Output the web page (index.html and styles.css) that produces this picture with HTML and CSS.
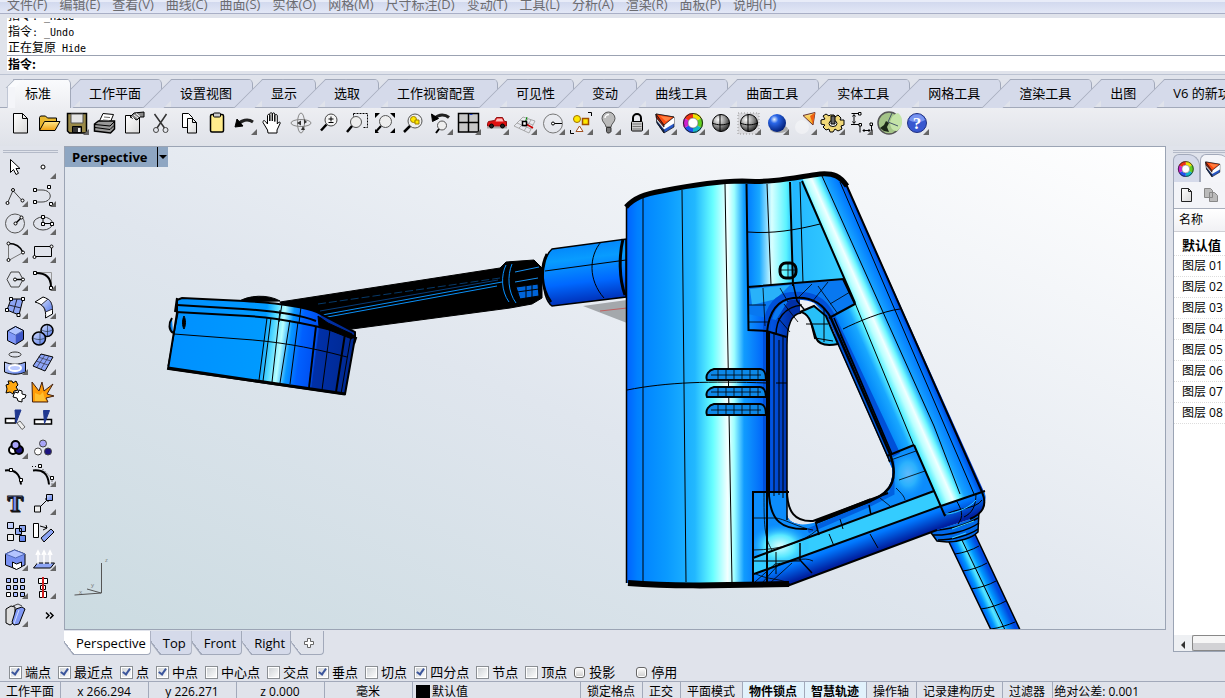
FILE: index.html
```html
<!DOCTYPE html>
<html lang="zh-CN">
<head>
  <meta charset="UTF-8" />
  <title>Rhinoceros</title>
  <link rel="stylesheet" href="styles.css">
</head>
<body>

  <!-- gradients shared by the icons -->
  <svg class="defs" width="0" height="0" aria-hidden="true">
    <defs>
      <radialGradient id="gGray" cx=".35" cy=".3" r=".75"><stop offset="0" stop-color="#fff"/><stop offset=".5" stop-color="#999"/><stop offset="1" stop-color="#222"/></radialGradient>
      <radialGradient id="gBlue" cx=".35" cy=".3" r=".75"><stop offset="0" stop-color="#e8f4ff"/><stop offset=".3" stop-color="#2a66e8"/><stop offset="1" stop-color="#001a70"/></radialGradient>
      <linearGradient id="gSoft" x2="1" y2="1"><stop offset="0" stop-color="#d4defc"/><stop offset="1" stop-color="#5478e8"/></linearGradient>
      <linearGradient id="gPage" x2="1" y2="1"><stop offset="0" stop-color="#fff"/><stop offset="1" stop-color="#d8d8d8"/></linearGradient>
      <linearGradient id="gGold" x2="0" y2="1"><stop offset="0" stop-color="#ffe88a"/><stop offset="1" stop-color="#f0a010"/></linearGradient>
      <symbol id="wheel" viewBox="0 0 28 28">
        <g fill="none" stroke-width="5">
          <path d="M15 6.500A7.500 7.500 0 0 1 21.500 10.200" stroke="#f0e000"/>
          <path d="M21.500 10.200A7.500 7.500 0 0 1 21.500 17.800" stroke="#60d020"/>
          <path d="M21.500 17.800A7.500 7.500 0 0 1 15 21.500" stroke="#10b8c8"/>
          <path d="M15 21.500A7.500 7.500 0 0 1 8.500 17.800" stroke="#2050f0"/>
          <path d="M8.500 17.800A7.500 7.500 0 0 1 8.500 10.200" stroke="#d020d0"/>
          <path d="M8.500 10.200A7.500 7.500 0 0 1 15 6.500" stroke="#f03010"/>
        </g>
        <circle cx="15" cy="14" r="9.500" fill="none" stroke="#222"/><circle cx="15" cy="14" r="5" fill="#fff" stroke="#555" stroke-width=".6"/>
      </symbol>
      <symbol id="layers" viewBox="0 0 28 28">
        <g stroke="#111" stroke-width=".7">
          <path d="M6 5l1 9 7 10 10-6V8z" fill="#2858c8"/>
          <path d="M6 5l1 9 7 10v-8z" fill="#102860"/>
          <path d="M14 15.500v5l10-6V8z" fill="#fff" stroke="none"/>
          <path d="M6.500 9l7.500 8v3.500L7 12z" fill="#ddd" stroke="none"/>
          <path d="M6 5l8 11v2L6.500 9z" fill="#b01800"/>
          <path d="M6 5l18 3-10 8z" fill="#ff4c10"/>
        </g>
        <path d="M10 7l12 1.500-6 4z" fill="#ff8040"/>
      </symbol>
    </defs>
  </svg>

  <nav class="menu">
    <a href="#">文件(F)</a><a href="#">编辑(E)</a><a href="#">查看(V)</a><a href="#">曲线(C)</a><a href="#">曲面(S)</a><a href="#">实体(O)</a><a href="#">网格(M)</a><a href="#">尺寸标注(D)</a><a href="#">变动(T)</a><a href="#">工具(L)</a><a href="#">分析(A)</a><a href="#">渲染(R)</a><a href="#">面板(P)</a><a href="#">说明(H)</a>
  </nav>

  <section class="command">
    <div class="history">
      <p>指令<span class="mono">: _Hide</span></p>
      <p>指令<span class="mono">: _Undo</span></p>
      <p>正在复原<span class="mono"> Hide</span></p>
    </div>
    <div class="prompt"><label for="cmd">指令:</label><input type="text" id="cmd"></div>
  </section>

  <header class="ribbon">
    <div class="tabs">
      <button class="tab active">标准</button><button class="tab">工作平面</button><button class="tab">设置视图</button><button class="tab short">显示</button><button class="tab short">选取</button><button class="tab long">工作视窗配置</button><button class="tab short">可见性</button><button class="tab short">变动</button><button class="tab">曲线工具</button><button class="tab">曲面工具</button><button class="tab">实体工具</button><button class="tab">网格工具</button><button class="tab">渲染工具</button><button class="tab short">出图</button><button class="tab">V6 的新功能</button>
    </div>
    <div class="toolbar">
      <button class="tool" aria-label="新建"><svg viewBox="0 0 28 28"><path d="M7.500 4.500h9l5 5v14.500h-14z" fill="url(#gPage)"/><path d="M16.500 4.500v5h5"/></svg></button>
      <button class="tool" aria-label="打开"><svg viewBox="0 0 28 28"><path d="M5.500 21V8.500l1-1.500h5l2 2h9v4" fill="#e8b830"/><path d="M5.500 21.500l5-9h15.500l-5 9z" fill="url(#gGold)"/></svg></button>
      <button class="tool more" aria-label="保存"><svg viewBox="0 0 28 28"><path d="M5.500 4.500h19v19.500h-17l-2-2z" fill="#9a8a48" stroke-width="1.500"/><path d="M9 5h12v9H9z" fill="#e4e4e4" stroke="#555"/><path d="M10.500 17.500h9v6h-9z" fill="#333"/><path d="M16 19h2.500v4H16z" fill="#eee" stroke="none"/></svg></button>
      <button class="tool" aria-label="打印"><svg viewBox="0 0 28 28"><path d="M9 13l4-8.500 10.500 1L20 14" fill="#fff"/><path d="M4.500 15l4-3h16v8l-4 4-16-2z" fill="#999" stroke-width="1.500"/><path d="M5 15.500l15 1.500 4.500-4.500M5 18.500l15 2 4-4" /><path d="M14 8l6 .5M13 11l6 .5" stroke="#666"/></svg></button>
      <button class="tool" aria-label="属性"><svg viewBox="0 0 28 28"><path d="M7.500 6.500h14v17.500h-14z" fill="url(#gPage)"/><path d="M12 8l4-4 10-1v5h-4l-3 3z" fill="#888"/><path d="M14 8l3 3M16 6l4 3M18 4.500l4 3" stroke="#fff"/></svg></button>
      <button class="tool" aria-label="剪切"><svg viewBox="0 0 28 28"><path d="M8.500 5l10 14M20.500 5L11 19" stroke="#333" stroke-width="1.500"/><circle cx="10" cy="21" r="2.500" stroke="#444"/><circle cx="19.500" cy="21" r="2.500" stroke="#444"/></svg></button>
      <button class="tool" aria-label="复制"><svg viewBox="0 0 28 28"><path d="M8.500 4.500h6l4 4v10h-10z" fill="#fff"/><path d="M13.500 9.500h5l4 4v10.500h-9z" fill="url(#gPage)"/><path d="M18.500 9.500v4h4"/></svg></button>
      <button class="tool" aria-label="粘贴"><svg viewBox="0 0 28 28"><rect x="8.500" y="5.500" width="13" height="17.500" rx="1.500" fill="#ffec8c" stroke-width="1.500"/><rect x="11.500" y="4" width="7" height="4" rx="1" fill="#ccc"/></svg></button>
      <button class="tool more" aria-label="撤销"><svg viewBox="0 0 28 28"><path d="M8 16c3-5 10-6.500 15-3" stroke="#222" stroke-width="3"/><path d="M5 18l2-8 6 7z" fill="#000"/></svg></button>
      <button class="tool" aria-label="平移"><svg viewBox="0 0 28 28"><path d="M9.500 21L5 13.500c-.5-2 1.500-2.500 2.500-1l2 2.500V6.500c.3-1.500 2-1.500 2.300 0V12 4.800c.4-1.500 2.200-1.500 2.500 0V12 5c.4-1.500 2.200-1.500 2.500 0v7.500-6c.4-1.300 2.200-1.300 2.500 0V15c1-2 3-2.500 3-1l-3.300 7v3h-9z" fill="#fff"/></svg></button>
      <button class="tool" aria-label="旋转"><svg viewBox="0 0 28 28"><ellipse cx="15" cy="14" rx="10" ry="3.500" stroke="#888"/><ellipse cx="15" cy="14" rx="3.500" ry="10" stroke="#888"/><path d="M11 14l4-2.500v5zM18 10l3 3-3 2zM15 21l2-4 2 4z" fill="#333" stroke="none"/></svg></button>
      <button class="tool" aria-label="动态缩放"><svg viewBox="0 0 28 28"><circle cx="17" cy="11" r="6" fill="#f4f4f4" stroke="#444"/><path d="M12.500 15.500L7 21.500" stroke-width="2.500"/><path d="M17 7.500v5M14.500 10h5M14.500 13.500h5"/></svg></button>
      <button class="tool" aria-label="框选缩放"><svg viewBox="0 0 28 28"><path d="M11.500 4.500h14v14h-5M11.500 4.500v4" stroke-dasharray="2 1"/><circle cx="14" cy="13" r="5.500" fill="#eee" stroke="#555"/><path d="M10 17l-5 6" stroke-width="2.500"/></svg></button>
      <button class="tool" aria-label="缩放至最大范围"><svg viewBox="0 0 28 28"><circle cx="15.500" cy="12.500" r="6" fill="#eee" stroke="#555"/><path d="M11 17l-5 5.500" stroke-width="2"/><path d="M5 4h5l-5 5zM25 4h-5l5 5zM25 24h-5l5-5zM5 24h4l-4-4z" fill="#000" stroke="none"/></svg></button>
      <button class="tool" aria-label="缩放至选取物件"><svg viewBox="0 0 28 28"><circle cx="17" cy="12" r="7" fill="#eee" stroke="#555"/><path d="M12 17l-6 6" stroke-width="2.500"/><circle cx="15.500" cy="10.500" r="3" fill="#ffe800" stroke="#a08000"/><path d="M17 11h4v4h-4z" fill="#ffe800" stroke="#a08000"/></svg></button>
      <button class="tool more" aria-label="复原缩放"><svg viewBox="0 0 28 28"><path d="M9 9c4-4 10-4 14-.5" stroke="#222" stroke-width="3"/><path d="M5.500 5l1 7.500 6-3z" fill="#000"/><circle cx="16" cy="16.500" r="4.500" fill="#eee" stroke="#555"/><path d="M13 20l-3 4" stroke-width="2"/></svg></button>
      <button class="tool more" aria-label="四个视图"><svg viewBox="0 0 28 28"><path d="M4.500 4.500h20v18.500h-20z" fill="#c8c8c8" stroke-width="1.500"/><path d="M14.500 4v19M4 13.500h21" stroke-width="1.500"/><path d="M15.500 5.500h3" stroke="#2040c0"/></svg></button>
      <button class="tool more" aria-label="设置视图"><svg viewBox="0 0 28 28"><path d="M5 18.500h20" stroke="#aaa" stroke-width="2"/><path d="M5.500 14.500l1-2 6-1 2-3h6l2 4h2v4.500h-19z" fill="#e01010" stroke="#901010"/><path d="M15 9.500h5l1.500 3h-8z" fill="#fbb" stroke="none"/><circle cx="9.500" cy="17" r="2" fill="#222"/><circle cx="20.500" cy="17" r="2" fill="#222"/></svg></button>
      <button class="tool more" aria-label="设置工作平面"><svg viewBox="0 0 28 28"><path d="M4 17l9-9 12 4-6 12zM7 14l14 6M10 11l13 5M9 19l9-9M14 22l7-11" stroke="#999" stroke-width=".8"/><path d="M16 15l7 4" stroke="#c00" stroke-width="1.500"/><path d="M15 14l2-6" stroke="#080"/><path d="M12.500 12.500h4v4h-4z" fill="#fff" stroke-width="1.500"/></svg></button>
      <button class="tool more" aria-label="圆"><svg viewBox="0 0 28 28"><circle cx="15" cy="14.500" r="9.500" stroke="#777"/><path d="M15 14.500h9"/><circle cx="15" cy="14.500" r="1.500" fill="#fff"/></svg></button>
      <button class="tool more" aria-label="选取"><svg viewBox="0 0 28 28"><circle cx="11" cy="10" r="3.500" fill="#ffe800" stroke="#a07000"/><path d="M16.500 9.500h6v6h-6z" fill="#ffe800" stroke="#a05000" stroke-width="1.500"/><path d="M13.500 17l-3.500 5.500h7z" fill="#fff" stroke="#a05020"/><path d="M22 3.500h3.500V7M4.500 21v3.500H8"/></svg></button>
      <button class="tool more" aria-label="隐藏"><svg viewBox="0 0 28 28"><path d="M12 18c0-3-4-5-4-8.500a6.500 6.500 0 0 1 13 0C21 13 17 15 17 18z" fill="#bbb" stroke="#555"/><path d="M11 9c0-2 2-3.500 4-3.500" stroke="#fff" stroke-width="1.500"/><path d="M12.500 18.500h4.500v4l-1.500 1.500h-2l-1-1.500z" fill="#777" stroke="#333"/></svg></button>
      <button class="tool more" aria-label="锁定"><svg viewBox="0 0 28 28"><path d="M11 13V9a4 4 0 0 1 8 0v4" stroke-width="2"/><rect x="9.500" y="12.500" width="11" height="9.500" rx="1" fill="#ccc"/><path d="M10.500 15h9M10.500 17.500h9M10.500 20h9" stroke="#777"/></svg></button>
      <button class="tool more" aria-label="图层"><svg viewBox="0 0 28 28"><use href="#layers" stroke="none"/></svg></button>
      <button class="tool more" aria-label="颜色"><svg viewBox="0 0 28 28"><use href="#wheel"/></svg></button>
      <button class="tool" aria-label="着色"><svg viewBox="0 0 28 28"><circle cx="15" cy="14" r="8.500" fill="url(#gGray)"/><path d="M6.500 14c5 2.500 12 2.500 17 0M14 5.500v17"/></svg></button>
      <button class="tool more" aria-label="着色全部"><svg viewBox="0 0 28 28"><path d="M4 4h21v21H4z" stroke="#999" stroke-dasharray="1 2" fill="#d8d8dc"/><circle cx="15" cy="14" r="8.500" fill="url(#gGray)"/><path d="M6.500 14c5 2.500 12 2.500 17 0M14 5.500v17"/></svg></button>
      <button class="tool more" aria-label="渲染"><svg viewBox="0 0 28 28"><ellipse cx="17" cy="20" rx="9" ry="4" fill="#aaa" stroke="none"/><circle cx="15" cy="14" r="9" fill="url(#gBlue)" stroke="none"/></svg></button>
      <button class="tool more" aria-label="聚光灯"><svg viewBox="0 0 28 28"><circle cx="12" cy="18" r="7" fill="#fff" stroke="none" opacity=".4"/><path d="M13 6.500l12-3-2 12.500z" fill="url(#gGold)" stroke="#633"/><path d="M20 7l5-3.500-2 12z" fill="#f06010" stroke="none"/></svg></button>
      <button class="tool more" aria-label="选项"><svg viewBox="0 0 28 28"><path d="M12 6h4l1 2 3-2 3 3-1 2h4v5l-3 1 1 3-4 2-3-2-2 3h-3l-1-3-3 1-3-3 2-2-4-1v-4l4-1-2-3 3-2 3 2z" fill="#f0d878"/><ellipse cx="15" cy="14.500" rx="4" ry="3" fill="#fff"/><path d="M13 7h4v8h-4z" fill="#666"/></svg></button>
      <button class="tool more" aria-label="尺寸标注"><svg viewBox="0 0 28 28"><path d="M5.500 4.500h8M5 15.500h9v8M8 6v8M6.500 7.500L8 5.500l1.500 2M6.500 12.500L8 14.500l1.500-2M25.500 14v10M17 21.500h7M18.500 20L17 21.500l1.500 1.500M22.500 20l1.500 1.500-1.500 1.500"/><path d="M12.500 3.500h2.500v2.500h-2.500zM24 14h2.500v2.500H24zM13 14.500h2.500v2.500H13z" fill="#fff"/></svg></button>
      <button class="tool" aria-label="Grasshopper"><svg viewBox="0 0 28 28"><circle cx="15" cy="14" r="11" fill="#a4c488" stroke="#555" stroke-width="1.500"/><path d="M16 13c2-6 4-8 8-9a11 11 0 0 1-1 18c-5 0-7-4-7-9z" fill="#c4e4a8" stroke="none"/><path d="M6 19l4-3 2-4 3 2-2 4 2 5-5-1z" fill="#1c2818" stroke="none"/><path d="M14 13l10 4M14 13l4-9" stroke="#456"/></svg></button>
      <button class="tool more" aria-label="说明"><svg viewBox="0 0 28 28"><circle cx="15" cy="14" r="9.500" fill="#3858d0" stroke="#203080"/><path d="M7 11a8.500 8.500 0 0 1 16 0c-5 3-11 3-16 0z" fill="#7894f0" stroke="none"/><text class="glyph-help" x="15" y="20" text-anchor="middle">?</text></svg></button>
    </div>
  </header>

  <main>
    <aside class="side">
      <div class="grip"></div>
      <div class="tools">
        <button class="tool" aria-label="选取"><svg viewBox="0 0 28 28"><path d="M9.500 6.500v13l3-3 2.500 5 2.500-1.200-2.500-4.800h4z" fill="#fff"/></svg></button>
        <button class="tool more" aria-label="点"><svg viewBox="0 0 28 28"><circle cx="14" cy="14" r="2" fill="#fff"/></svg></button>
        <button class="tool more" aria-label="多重直线"><svg viewBox="0 0 28 28"><path d="M6.500 22L12 9.500l9.500 10.500" stroke="#444"/><g fill="#fff"><circle cx="6.500" cy="22" r="1.500"/><circle cx="12" cy="9" r="1.500"/><circle cx="21.500" cy="19.500" r="1.500"/></g></svg></button>
        <button class="tool more" aria-label="控制点曲线"><svg viewBox="0 0 28 28"><path d="M6 9h7c11 0 11 12 0 12H6" stroke="#444"/><path d="M4.500 7.500h3v3h-3zM18.500 4.500h3v3h-3zM4.500 19.500h3v3h-3zM20.500 21.500h3v3h-3z" fill="#fff"/></svg></button>
        <button class="tool more" aria-label="圆"><svg viewBox="0 0 28 28"><circle cx="14" cy="14.500" r="9.500" stroke="#555"/><path d="M14.500 14.500l6-6" stroke-width="1.500"/><circle cx="14.500" cy="14.500" r="1.500" fill="#fff"/><circle cx="20.500" cy="8.500" r="1.500" fill="#fff"/></svg></button>
        <button class="tool more" aria-label="椭圆"><svg viewBox="0 0 28 28"><ellipse cx="14" cy="14.500" rx="9.500" ry="6.500" stroke="#444"/><path d="M14 9v5.500h9"/><path d="M12.500 6.500h3v3h-3zM12.500 13.500h3v3h-3zM21.500 13.500h3v3h-3z" fill="#fff"/></svg></button>
        <button class="tool more" aria-label="圆弧"><svg viewBox="0 0 28 28"><path d="M7.500 6.500c7 0 12 3 14.500 9" stroke-width="1.500"/><path d="M7.500 6.500v17l14.500-8" stroke="#777"/><g fill="#fff"><circle cx="7.500" cy="6.500" r="1.500"/><circle cx="7.500" cy="23" r="1.500"/><circle cx="22" cy="15.500" r="1.500"/></g></svg></button>
        <button class="tool more" aria-label="矩形"><svg viewBox="0 0 28 28"><path d="M5.500 9.500h17v10h-17z"/><circle cx="22.500" cy="9.500" r="1.500" fill="#fff"/><circle cx="5.500" cy="20" r="1.500" fill="#fff"/></svg></button>
        <button class="tool more" aria-label="多边形"><svg viewBox="0 0 28 28"><path d="M6 14.500l4-7.500h8l4 7.500-4 7.500h-8z" stroke="#444"/><path d="M14 14.500h8" stroke-width="1.500"/><circle cx="14" cy="14.500" r="1.500" fill="#fff"/><circle cx="22" cy="14.500" r="1.500" fill="#fff"/></svg></button>
        <button class="tool more" aria-label="曲线圆角"><svg viewBox="0 0 28 28"><path d="M7 7.500h15.500v14" stroke="#999"/><path d="M7 8c9 0 15 4 15 14" stroke-width="2"/><path d="M4.500 6.500h3v3h-3zM20.500 21.500h3v3h-3z" fill="#fff"/></svg></button>
        <button class="tool more" aria-label="曲面"><svg viewBox="0 0 28 28"><path d="M10 6h12l-4 16-12-5z" fill="#8ca4f4"/><path d="M16 6l-4 14M8 12l12 3" stroke="#223"/><path d="M8.500 4.500h3v3h-3zM20.500 4.500h3v3h-3zM4.500 15.500h3v3h-3zM16 20.500h3v3h-3z" fill="#fff"/></svg></button>
        <button class="tool more" aria-label="曲面圆角"><svg viewBox="0 0 28 28"><path d="M6 9l8-5c7 2 10 6 9.500 17l-7 4c1-10-3-14-10.500-16z" fill="#fff"/><path d="M12 12l7-6c3 2 4 5 4.500 10l-7 3c0-3-2-6-4.500-7z" fill="url(#gSoft)" stroke="#334"/></svg></button>
        <button class="tool more" aria-label="立方体"><svg viewBox="0 0 28 28"><path d="M6.500 10l8 4v9.500l-8-4z" fill="#8098f8" stroke="none"/><path d="M14.500 14l8-4.500v9l-8 5z" fill="#4058c8" stroke="none"/><path d="M6.500 10l8-4.500 8 4-8 4.500z" fill="#b0c4ff" stroke="#5068b8"/><path d="M6.500 10l8-4.500 8 4v9l-8 5-8-4z"/></svg></button>
        <button class="tool more" aria-label="布尔运算"><svg viewBox="0 0 28 28"><circle cx="18" cy="9.500" r="6" fill="url(#gSoft)" stroke-width="1.500"/><circle cx="10" cy="17.500" r="6.500" fill="url(#gSoft)" stroke-width="1.500"/><path d="M4 17c4 2 8 2 12 0M11 11.500v12M13 9c3 2 7 2 10 0M18.500 4v11" stroke="#234" stroke-width=".7"/></svg></button>
        <button class="tool more" aria-label="投影曲线"><svg viewBox="0 0 28 28"><path d="M3.500 13c7 3 14 3 21 0v10c-7 3-14 3-21 0z" fill="url(#gSoft)"/><ellipse cx="14" cy="19" rx="6" ry="3" fill="#b8c8ff" stroke="#fff" stroke-width="2"/><ellipse cx="14" cy="5.500" rx="6" ry="2.500" stroke="#333"/></svg></button>
        <button class="tool more" aria-label="网格"><svg viewBox="0 0 28 28"><path d="M4 17l8-12 12 3-8 14z" fill="#8ca4f8"/><path d="M8 18l8-12M12 20l8-13M7 12l12 4M9 8l13 4" stroke="#334" stroke-width=".7"/></svg></button>
        <button class="tool" aria-label="组合"><svg viewBox="0 0 28 28"><path d="M5 8l3-1-1-3h4l1 2 3-2 2 4-2 2 2 3-4 1-1 3-3-2-4 1 1-4z" fill="#ffa810"/><path d="M14 15l3 1 1-3 3 1v3l4 1-1 3-3 1v3l-4-1-1-3-4-1 1-3z" fill="#fff"/></svg></button>
        <button class="tool" aria-label="炸开"><svg viewBox="0 0 28 28"><path d="M3.500 25L3 5l7 9 3-9 2 9 9-7-6 10 7 2-8 2 2 4z" fill="#ff9c08" stroke="#421"/><path d="M6 24l0-8 5 2 3-3 1 4 2 5z" fill="#ffc030" stroke="none"/></svg></button>
        <button class="tool" aria-label="修剪"><svg viewBox="0 0 28 28"><path d="M4.500 13.500h10v4.500h-10z" fill="#fff" stroke-width="1.500"/><path d="M14 5h6l-5 13z" fill="#203890" stroke="#203890"/><path d="M16 18l3-2 5 6-3 2.500z" fill="#eee" stroke="#666"/></svg></button>
        <button class="tool" aria-label="分割"><svg viewBox="0 0 28 28"><path d="M5.500 14.500h17v4.500h-17z" fill="#fff" stroke-width="1.500"/><path d="M14.500 5.500h6l-5 13z" fill="#203890" stroke="#203890"/></svg></button>
        <button class="tool more" aria-label="群组"><svg viewBox="0 0 28 28"><g stroke-width="2"><circle cx="12" cy="17" r="4" fill="#fff"/><circle cx="18" cy="17" r="4" fill="#1c1480"/><circle cx="14.500" cy="12" r="4" fill="#a8a4f8"/></g></svg></button>
        <button class="tool" aria-label="解散群组"><svg viewBox="0 0 28 28"><circle cx="14" cy="10.500" r="3.500" fill="#a8a4f8" stroke="#444"/><circle cx="9" cy="18.500" r="3.500" fill="#fff" stroke="#444"/><circle cx="19" cy="18.500" r="3.500" fill="#1c1480" stroke="#444"/></svg></button>
        <button class="tool" aria-label="编辑点"><svg viewBox="0 0 28 28"><path d="M4 9.500c10-1 15 3 16 14" stroke-width="2"/><path d="M8.500 7.500h3v3h-3zM18.500 17.500h3v3h-3z" fill="#fff"/></svg></button>
        <button class="tool more" aria-label="控制点"><svg viewBox="0 0 28 28"><path d="M4 9.500c10-1 15 3 16 14" stroke-width="2"/><path d="M3 5.500h8l12 12v8" stroke-dasharray="1 2"/><path d="M9.500 3.500h3v3h-3zM21.500 15.500h3v3h-3z" fill="#fff"/></svg></button>
        <button class="tool" aria-label="文字"><svg viewBox="0 0 28 28"><text class="glyph-text back" x="15" y="23" text-anchor="middle">T</text><text class="glyph-text" x="14" y="22" text-anchor="middle">T</text></svg></button>
        <button class="tool more" aria-label="移动"><svg viewBox="0 0 28 28"><path d="M12 17l7-7M16 10h3v3"/><path d="M5.500 17h6v6h-6z" fill="#eee"/><path d="M17.500 5.500h6v6h-6z" fill="url(#gSoft)"/></svg></button>
        <button class="tool" aria-label="复制"><svg viewBox="0 0 28 28"><path d="M6.500 5.500h6v6h-6zM18.500 8.500h6v6h-6zM14.500 11.500h6v6h-6zM18.500 18.500h6v6h-6z" fill="url(#gSoft)"/><path d="M6.500 17.500h6v6h-6z" fill="#eee"/></svg></button>
        <button class="tool" aria-label="旋转"><svg viewBox="0 0 28 28"><path d="M4.500 6.500h5v14h-5z" fill="#fff"/><path d="M11 9l7 2M14 13l4-2-1-3"/><path d="M12 21l10-9 3 3-10 10z" fill="#8ca4f4"/></svg></button>
        <button class="tool more" aria-label="实体工具"><svg viewBox="0 0 28 28"><path d="M4.500 9l9-4 10.500 4v11l-9 4-10.500-4z" fill="#7890f0"/><path d="M4.500 9l10 4 9.500-4-10.500-4z" fill="#b4c4ff" stroke="#5068b8"/><path d="M11.500 17l4 2 5-2v5l-5 2.500-4-2z" fill="#fff"/></svg></button>
        <button class="tool more" aria-label="拉伸"><svg viewBox="0 0 28 28"><path d="M4.500 23l4-5h17l-4 5z" fill="#8ca4f4"/><path d="M9 19V8M15 19V8M21 19V8M7 10l2-4 2 4M13 10l2-4 2 4M19 10l2-4 2 4" stroke="#fff" stroke-width="1.500"/></svg></button>
        <button class="tool more" aria-label="阵列"><svg viewBox="0 0 28 28"><path d="M5.500 5.500h4v4h-4zM12.500 5.500h4v4h-4zM19.500 5.500h4v4h-4zM5.500 12.500h4v4h-4zM12.500 12.500h4v4h-4zM19.500 12.500h4v4h-4zM12.500 19.500h4v4h-4zM19.500 19.500h4v4h-4z" fill="#a8bcff"/><path d="M5.500 19.500h4v4h-4z" fill="#fff"/></svg></button>
        <button class="tool more" aria-label="对齐"><svg viewBox="0 0 28 28"><path d="M9.500 5.500h9v5h-9zM11.500 12.500h5v4h-5zM10.500 18.500h7v6h-7z" fill="#fff"/><path d="M14 4v21" stroke="#d02020" stroke-width="2"/></svg></button>
        <button class="tool more" aria-label="分析"><svg viewBox="0 0 28 28"><path d="M5 8l5-3 4 1v15l-5 3-4-2z" fill="#ddd"/><path d="M15 8l6-2 3 2-6 15-5 1-2-3z" fill="#8098f4"/><path d="M18 9l-5 14" stroke="#d0dcff"/><path d="M12 5l5-2 4 2" stroke="#444"/></svg></button>
        <button class="tool" aria-label="更多"><svg viewBox="0 0 28 28"><path d="M17 11.500l3 3-3 3M21 11.500l3 3-3 3" stroke-width="1.500"/></svg></button>
      </div>
    </aside>

    <section class="center">
      <div class="viewport">
        <svg class="scene" viewBox="65 147 1100 482" preserveAspectRatio="xMidYMid slice">
          <defs>
            <linearGradient id="body" gradientUnits="userSpaceOnUse" x1="626" x2="790" y1="0" y2="0">
              <stop offset="0" stop-color="#0060ff"/><stop offset=".07" stop-color="#0080ff"/><stop offset=".25" stop-color="#0a9aff"/><stop offset=".42" stop-color="#22b8ff"/><stop offset=".53" stop-color="#68ffff"/><stop offset=".62" stop-color="#f4ffff"/><stop offset=".66" stop-color="#9effff"/><stop offset=".72" stop-color="#109cff"/><stop offset=".85" stop-color="#0060f8"/><stop offset="1" stop-color="#0030a8"/>
            </linearGradient>
            <linearGradient id="handle" gradientUnits="userSpaceOnUse" x1="862" y1="400" x2="930" y2="370">
              <stop offset="0" stop-color="#0048c8"/><stop offset=".12" stop-color="#0080f8"/><stop offset=".32" stop-color="#18a8ff"/><stop offset=".42" stop-color="#58f0ff"/><stop offset=".5" stop-color="#b8ffff"/><stop offset=".58" stop-color="#f0ffff"/><stop offset=".66" stop-color="#70f8ff"/><stop offset=".74" stop-color="#18a4ff"/><stop offset=".9" stop-color="#0078ff"/><stop offset="1" stop-color="#0038d0"/>
            </linearGradient>
            <linearGradient id="panel" gradientUnits="userSpaceOnUse" x1="747" x2="850" y1="0" y2="0">
              <stop offset="0" stop-color="#007cff"/><stop offset=".12" stop-color="#18a8ff"/><stop offset=".24" stop-color="#d8ffff"/><stop offset=".38" stop-color="#5cf4ff"/><stop offset=".45" stop-color="#24b8ff"/><stop offset="1" stop-color="#38d0ff"/>
            </linearGradient>
            <linearGradient id="foot" gradientUnits="userSpaceOnUse" x1="840" y1="530" x2="851" y2="560">
              <stop offset="0" stop-color="#18a8ff"/><stop offset=".5" stop-color="#0078ff"/><stop offset="1" stop-color="#0020a0"/>
            </linearGradient>
            <linearGradient id="tube" x2=".15" y2="1"><stop offset="0" stop-color="#0078f8"/><stop offset=".35" stop-color="#089cff"/><stop offset=".7" stop-color="#0068ff"/><stop offset="1" stop-color="#0030b8"/></linearGradient>
            <linearGradient id="cable" gradientUnits="userSpaceOnUse" x1="969" y1="585" x2="991" y2="575"><stop offset="0" stop-color="#0050f0"/><stop offset=".25" stop-color="#0098ff"/><stop offset=".45" stop-color="#58e8ff"/><stop offset=".7" stop-color="#0098ff"/><stop offset="1" stop-color="#0048e0"/></linearGradient>
            <linearGradient id="box" gradientUnits="userSpaceOnUse" x1="170" x2="352" y1="340" y2="364"><stop offset="0" stop-color="#0090ff"/><stop offset=".5" stop-color="#009aff"/><stop offset=".55" stop-color="#50d8ff"/><stop offset=".6" stop-color="#b8ffff"/><stop offset=".65" stop-color="#0898ff"/><stop offset=".71" stop-color="#0060ff"/><stop offset=".79" stop-color="#0050f0"/><stop offset=".8" stop-color="#0030a8"/><stop offset="1" stop-color="#002890"/></linearGradient>
            <radialGradient id="glow"><stop offset="0" stop-color="#d8ffff"/><stop offset=".5" stop-color="#58e8ff"/><stop offset="1" stop-color="#18a8ff" stop-opacity="0"/></radialGradient>
            <clipPath id="shell">
              <path clip-rule="evenodd" d="M626 207c8-9 18-13 36-16 30-6 54-10 80-10 30 2 50-3 78-7 14-1 20 2 27 12L985 494c2 10-4 20-14 25l-34 11-134 50-16 6-160-3zM787 515V345c0-18 4-31 14-32 10 2 18 14 29 27l8 5 54 123c2 18-7 26-22 32l-53 22c-16 5-28 2-30-7z"/>
            </clipPath>
          </defs>

          <!-- construction plane seen behind the tube -->
          <path d="M583 306l44-6v23z" fill="#a4a8ac"/><path d="M600 311l27-3" stroke="#c06060"/>
          <path d="M772 308l28-2-8 12h-20z" fill="#b4b8bc"/>

          <!-- whisk shaft -->
          <g stroke="#000">
            <path d="M280 302L500 268l6-6 28-2 8 8v30l-10 6-22 4L352 329l-60-8z"/>
            <path d="M322 315l180-33M322 318l175-32" stroke="#0a90f8"/>
            <path d="M318 304l182-26" stroke="#0a60b0" stroke-width=".6" stroke-dasharray="8 3"/>
            <path d="M320 311l178-31" stroke="#083c78"/>
            <path d="M506 265c-5 10-5 26 3 37M512 264c-5 12-4 28 4 39" fill="none" stroke="#0890ff"/>
            <path d="M516 287l22-3 1 12-19 3z" fill="#0064d8"/><path d="M526 286v13M532 285v13M517 292l22-3"/>
            <path d="M515 272l24-5M515 282l23-4" stroke="#1890f0"/>
            <path d="M552 249l74-10v58l-74 9c-12-9-12-47 0-57z" fill="url(#tube)" stroke-width="1.500"/>
            <path d="M547 254c-7 12-6 34 4 48" fill="none" stroke-width="2.500"/>
            <path d="M545 271l81-11M601 242c-12 14-13 38 3 56" fill="none" stroke-width="1"/>
            <path d="M623 239c-4 16-4 40 2 56" fill="none" stroke-width="3"/>
          </g>

          <!-- whisk head -->
          <g stroke="#000" fill="none">
            <path d="M238 302c10-7 30-8 42-1z" fill="#000"/>
            <path d="M177 300l5-2 62 3c34 2 58 5 73 11l38 20v6l-10 56-177-25 9-56z" fill="url(#box)" stroke-width="2"/>
            <path d="M318 316l10 7 24 11v5l-33-13z" fill="#000"/>
            <path d="M177 305l66 4c32 2 58 6 73 12M176 312l72 4c32 2 64 8 106 20" stroke-width="2"/>
            <path d="M174 334l66 5c32 2 66 7 107 18"/>
            <path d="M168 368l177 26" stroke-width="3"/>
            <path d="M316 326l-7 62" stroke-width="2"/><path d="M345 334l-9 58" stroke-width="2"/>
            <path d="M330 330l-8 60M267 318l-8 62M271 318l-8 63M280 310l-8 72M290 320l-10 63M298 322l-8 62M282 304l-3 18M301 307l-2 16M351 336l-10 58"/>
            <path d="M172 318c-4 6-3 12 1 15" fill="#0080f0" stroke-width="2"/>
            <path d="M178 313l-10 53"/><path d="M184 316c-2 4-2 10 0 13 2-4 2-9 0-13z" fill="#000"/>
            <path d="M177 298l-2 14M352 337l4 1-2 6" stroke-width="2"/>
          </g>

          <!-- cable and collar -->
          <g stroke="#000" fill="none">
            <path d="M948 540l44 92 30 2-49-104z" fill="url(#cable)" stroke-width="1.500"/>
            <path d="M960 536l47 98M955 554c8-1 17-4 24-8M963 571c8-1 17-4 24-8M971 589c8-1 18-4 25-8M981 609c8-1 18-4 25-8M991 629c8-1 17-4 24-7"/>
            <path d="M929 530l8 11 10 1c12 0 25-4 31-10l1-22z" fill="#0068e8" stroke-width="1.500"/>
            <path d="M930 530c16 1 36-5 48-12M933 535c16 1 36-5 46-12M938 540c14 0 32-5 40-11" stroke-width="1.500"/>
            <path d="M952 529l22-8M952 538l14-5" stroke="#40d0ff"/>
          </g>

          <!-- body and handle -->
          <g clip-path="url(#shell)">
            <path d="M620 170h180v420H620z" fill="url(#body)"/>
            <path d="M795 160l70 10 130 320-20 35-130 20 20-80z" fill="url(#handle)"/>
            <path d="M747 175h54l44 104-97 9z" fill="url(#panel)"/>
            <path d="M748 287l95-8 12 25-27 14-20-22-18 2-14 22-28-6z" fill="#0878f0"/>
            <path d="M750 289l40-4-14 14-24 6z" fill="#40d8ff" opacity=".6"/>
            <path d="M767 585V325c2-18 12-28 24-29 20-2 32 4 40 20l66 140c8 24 2 40-24 48l-60 24z" fill="none" stroke="#0050d8" stroke-width="8"/>
            <path d="M753 492h34l12 28 24 0 62-24 3-36 26-15 32 70-193 78z" fill="#0c8cfc"/>
            <path d="M753 558l181-67 8 15-188 68z" fill="#34ccff"/>
            <ellipse cx="780" cy="546" rx="30" ry="22" fill="url(#glow)"/>
            <path d="M753 574l189-68 48-16-4 32-180 70h-53z" fill="url(#foot)"/>
            <ellipse cx="908" cy="474" rx="18" ry="24" fill="url(#glow)" opacity=".4"/>
            <path d="M886 463l6 0 0 30-24 12-60 26" fill="none" stroke="#0060e0" stroke-width="5"/>
          </g>

          <g fill="none" stroke="#000">
            <path d="M626 207c8-9 18-13 36-16 30-6 54-10 80-10 30 2 50-3 78-7 14-1 20 2 27 12" stroke-width="5"/>
            <path d="M846 184L982 492c6 14 0 22-12 27M937 530l-134 50-16 6" stroke-width="2"/>
            <path d="M626.500 205v378" stroke-width="1.500"/>
            <path d="M628 583c40 3 80 3 161 1" stroke-width="6"/>
            <path d="M643 197v385M682 190l4 392M725 184l7 400" stroke-width="1"/>
            <path d="M627 390c40-8 84-9 140-7M776 383h11"/>
            <path d="M746.500 184l2 146 18 1 20 6M748 287l95-8 12 25-26 14" stroke-width="2"/>
            <path d="M790 182l3 104M802 181l53 122" stroke-width="2"/>
            <path d="M767 184l4 101M800 182l3 101M748 232c24 2 48-2 72-8"/>
            <path d="M822 176l112 250 26 68M840 182l134 312M855 303l59 143"/>
            <path d="M843 329c14-7 40-18 57-20"/>
            <!-- inner grip edges -->
            <path d="M767 585V332c2-20 10-32 26-34 18-2 30 5 38 20" stroke-width="2"/>
            <path d="M769 332v164c2 24 12 34 38 33" stroke-width="2"/><path d="M774 332v164M779 340v155M783 336v162"/>
            <path d="M787 520V345c0-18 4-31 14-32M776 335c0-16 8-28 26-30M793 283l4 18 12 14 6 24" stroke-width="1.500"/>
            <path d="M800 312c10 1 12 14 16 26 3 7 12 8 22 6l-12-28-12-10z" fill="#28c0f8" stroke-width="2"/>
            <path d="M815 338l18 3M806 324h22M824 308v34"/>
            <path d="M830 316l60 138c8 22 4 38-20 47l-55 22" stroke-width="2.500"/>
            <path d="M838 344l52 118M834 318l58 136" stroke-width="1.500"/><path d="M840 334l50 116"/>
            <path d="M787 490c0 22 8 32 26 31l75-28" stroke-width="2"/>
            <path d="M816 522l55-22" stroke-width="4"/>
            <path d="M753 584v-92h36M753 558l181-67M754 574l187-68 44-15M914 445l31 71M887 456l27-11" stroke-width="2"/>
            <path d="M800 543v17l12 13M816 524l3 11M869 505l2 10" stroke-width="1.500"/>
            <path d="M829 534l5 12M840 519l3 10M870 534l8 14M776 552v22M754 561h46"/>
            <path d="M753 518h22c8 0 24 10 38 12M764 492c0 30 0 46 8 58M755 582l20-18c20-2 28-8 38-3M762 583l18-20M770 583l22-20M756 574c12 6 24 4 34 10M753 550c28 0 50-8 64-20" stroke-width=".8"/>
            <path d="M888 461l28-10M899 480l26-9M896 488c6 6 8 8 9 12M880 498l10 8" stroke-width=".8"/>
            <path d="M748 305h18M748 322h20M763 288l2 38M780 288l8 14M812 284l-14 14M828 282l-16 20M850 292l-20 12M818 286l20 28M778 318l12 14M784 304l14 18" stroke-width=".8"/>
            <path d="M944 516c8-8 32-6 38-16M956 500c6 10 8 16 2 24M976 493c0 14-4 20-12 24"/>
            <path d="M946 514c10 0 26-8 30-14" stroke="#30c8ff"/>
            <!-- power button -->
            <rect x="780" y="263" width="16" height="15" rx="6" stroke-width="3"/><path d="M781 270h14M788 263v14" stroke-width=".8"/>
          </g>

          <!-- vents -->
          <g fill="#0c88e8" stroke="#000" stroke-width="2">
            <path d="M714 369h46c4 0 6 5 6 11h-59c-2-5 2-10 7-11z"/>
            <path d="M714 387h46c4 0 6 5 6 10h-59c-2-5 2-9 7-10z"/>
            <path d="M714 404h46c4 0 6 5 6 11h-59c-2-5 2-10 7-11z"/>
            <path d="M711 375h50M711 392h50M711 410h50M718 369v11M726 369v11M734 369v11M742 369v11M750 369v11M758 369v11M718 387v10M726 387v10M734 387v10M742 387v10M750 387v10M758 387v10M718 404v11M726 404v11M734 404v11M742 404v11M750 404v11M758 404v11" stroke-width=".8"/>
          </g>

          <!-- world axes -->
          <path d="M101.500 563v30l-27 2M101 593l-14-4" fill="none" stroke="#555"/>
          <g class="axis"><text x="105" y="562">z</text><text x="91" y="587">y</text><text x="79" y="594">x</text></g>
        </svg>
        <div class="view-title"><button>Perspective</button><button class="drop" aria-label="视图菜单"></button></div>
      </div>
      <div class="view-tabs">
        <button class="view-tab active">Perspective</button><button class="view-tab">Top</button><button class="view-tab">Front</button><button class="view-tab">Right</button><button class="view-tab plus" aria-label="新建视图"><svg viewBox="0 0 10 10"><path d="M3.500.500h3v3h3v3h-3v3h-3v-3h-3v-3h3z" fill="#fff" stroke="#666"/></svg></button>
      </div>
    </section>

    <aside class="panel">
      <div class="grip"></div>
      <div class="panel-tabs">
        <button aria-label="属性"><svg viewBox="0 0 28 28"><use href="#wheel"/></svg></button>
        <button class="active" aria-label="图层"><svg viewBox="0 0 28 28"><use href="#layers"/></svg></button>
      </div>
      <div class="panel-body">
        <div class="panel-tools">
          <button aria-label="新建图层"><svg viewBox="0 0 14 16"><path d="M1.500 1.500h7l3 3v10h-10z" fill="url(#gPage)" stroke="#222"/><path d="M8.500 1.500v3h3" fill="none" stroke="#222"/></svg></button>
          <button aria-label="新建子图层"><svg viewBox="0 0 14 16"><path d="M.5 1.500h6l2 2v7h-8zM5.500 5.500h5l3 3v6h-8z" fill="#bbb" stroke="#888"/></svg></button>
        </div>
        <table>
          <thead><tr><th>名称</th></tr></thead>
          <tbody>
            <tr class="current"><td>默认值</td></tr>
            <tr><td>图层 01</td></tr>
            <tr><td>图层 02</td></tr>
            <tr><td>图层 03</td></tr>
            <tr><td>图层 04</td></tr>
            <tr><td>图层 05</td></tr>
            <tr><td>图层 06</td></tr>
            <tr><td>图层 07</td></tr>
            <tr><td>图层 08</td></tr>
          </tbody>
        </table>
        <div class="scrollbar"><button class="arrow" aria-label="向左滚动"></button><div class="thumb"></div></div>
      </div>
    </aside>
  </main>

  <div class="osnap">
    <label><input type="checkbox" checked>端点</label>
    <label><input type="checkbox" checked>最近点</label>
    <label><input type="checkbox" checked>点</label>
    <label><input type="checkbox" checked>中点</label>
    <label><input type="checkbox">中心点</label>
    <label><input type="checkbox">交点</label>
    <label><input type="checkbox" checked>垂点</label>
    <label><input type="checkbox">切点</label>
    <label><input type="checkbox" checked>四分点</label>
    <label><input type="checkbox">节点</label>
    <label><input type="checkbox">顶点</label>
    <label class="toggle"><input type="checkbox">投影</label>
    <label class="toggle last"><input type="checkbox">停用</label>
  </div>

  <footer class="status">
    <button class="plane">工作平面</button>
    <span class="coord">x 266.294</span>
    <span class="coord">y 226.271</span>
    <span class="coord">z 0.000</span>
    <span class="coord">毫米</span>
    <button class="layer"><i></i>默认值</button>
    <button>锁定格点</button>
    <button>正交</button>
    <button>平面模式</button>
    <button class="on">物件锁点</button>
    <button class="on">智慧轨迹</button>
    <button>操作轴</button>
    <button>记录建构历史</button>
    <button>过滤器</button>
    <span class="tolerance">绝对公差: 0.001</span>
  </footer>

</body>
</html>
```
FILE: styles.css
```css
* {
  box-sizing: border-box;
}

body {
  margin: 0;
  height: 100vh;
  display: flex;
  flex-direction: column;
  overflow: hidden;
  background: #e0e3eb;
  color: #000;
  font-family: "Open Sans", "Noto Sans CJK SC", sans-serif;
  font-size: 13px;
}

button {
  margin: 0;
  padding: 0;
  border: none;
  background: none;
  color: inherit;
  font: inherit;
  white-space: nowrap;
}

.defs {
  position: absolute;
}

/* Menu */
.menu {
  flex: none;
  display: flex;
  align-items: flex-end;
  gap: 12px;
  height: 14px;
  padding: 0 7px;
  overflow: hidden;
  border-bottom: 1px solid #a9afc6;
  background: linear-gradient(#e8ecf8 0 2px, #d2d9ee 2px, #e2e7f6);
  line-height: 18px;
}

.menu a {
  color: #6c6c70;
  text-decoration: none;
  white-space: nowrap;
}

/* Command line */
.command {
  flex: none;
  height: 61px;
  padding: 4px 0 3px 7px;
  border-bottom: 1px solid #bcc3d2;
  font-family: "Noto Sans CJK SC", sans-serif;
  font-size: 12px;
}

.history {
  display: flex;
  flex-direction: column;
  justify-content: flex-end;
  height: 38px;
  overflow: hidden;
  background: #fff;
  border-bottom: 1px solid #9ba2b2;
}

.history p {
  flex: none;
  height: 16px;
  margin: 0;
  padding-left: 1px;
  line-height: 16px;
  white-space: pre;
}

.mono {
  font-family: "DejaVu Sans Mono", monospace;
  font-size: 10px;
  line-height: 10px;
}

.prompt {
  display: flex;
  align-items: center;
  height: 15px;
  padding-left: 1px;
  background: #fff;
  font-weight: 700;
  line-height: 15px;
}

.prompt input {
  flex: 1;
  height: 14px;
  padding: 0;
  border: none;
  outline: none;
}

/* Ribbon tabs */
.ribbon {
  flex: none;
  height: 71px;
  padding-top: 4px;
  overflow: hidden;
}

.tabs {
  display: flex;
  height: 29px;
  padding-left: 7px;
  border-bottom: 1px solid #a2a9ba;
}

.tab {
  position: relative;
  isolation: isolate;
  flex: none;
  height: 28px;
  padding: 0 20px 1px 18px;
  border-right: 1px solid #a2a9ba;
  border-top-right-radius: 5px;
  background: linear-gradient(#a2a9ba 0 1px, #d5daea 1px) 9px 0 no-repeat;
}

.tab.short {
  padding-right: 18px;
}

.tab.long {
  padding-right: 22px;
}

.tab::before {
  content: "";
  position: absolute;
  z-index: -1;
  top: 0;
  left: -5px;
  width: 20px;
  height: 28px;
  border: 1px solid #a2a9ba;
  border-width: 1px 0 0 1px;
  background: #d5daea;
  transform: skewX(-45deg);
}

.tab.active {
  z-index: 1;
  height: 29px;
  padding: 0 19px 2px 18px;
  background: linear-gradient(#a2a9ba 0 1px, #fafbfd 1px, #edeef2) 6px 0 no-repeat;
}

.tab.active::before {
  left: 3px;
  width: 8px;
  height: 8px;
  background: #fafbfd;
}

.tab.active::after {
  content: "";
  position: absolute;
  z-index: -1;
  top: 8px;
  left: 0;
  width: 7px;
  height: 21px;
  border-left: 1px solid #c0c6d4;
  background: #f4f5f9;
}

.toolbar {
  display: flex;
  height: 38px;
  padding: 1px 0 0 6px;
  background: linear-gradient(#edeef2, #dfe2e9);
}

.tool {
  position: relative;
  flex: none;
  width: 28px;
  height: 28px;
}

.tool svg {
  display: block;
  width: 28px;
  height: 28px;
  fill: none;
  stroke: #000;
}

.tool.more::after {
  content: "";
  position: absolute;
  right: 1px;
  bottom: 2px;
  border: 3px solid transparent;
  border-right-color: #666;
  border-bottom-color: #666;
}

.glyph-help {
  fill: #fff;
  stroke: none;
  font: bold 17px "Liberation Serif", serif;
}

.glyph-text {
  fill: #7890f0;
  stroke: #111;
  font: bold 23px "Liberation Serif", serif;
}

.glyph-text.back {
  fill: #111;
}

/* Main area */
main {
  flex: 1;
  display: flex;
  min-height: 0;
}

.side {
  flex: none;
  width: 64px;
  padding: 4px 6px 0 1px;
}

.grip {
  height: 3px;
  margin-left: 2px;
  border: 1px solid #b4bac8;
  border-width: 1px 0;
}

.tools {
  display: grid;
  grid-template-columns: 28px 28px;
}

.center {
  flex: 1;
  display: flex;
  flex-direction: column;
  min-width: 0;
}

.viewport {
  position: relative;
  flex: 1;
  min-height: 0;
  border: 1px solid #9ba4b4;
  background: linear-gradient(to top right, #cbdbe1, #e0e6ee 45%, #fff);
}

.scene {
  display: block;
  width: 100%;
  height: 100%;
}

.axis {
  fill: #777;
  font: 6px "Open Sans", sans-serif;
}

.view-title {
  position: absolute;
  top: 0;
  left: 0;
  display: flex;
  height: 20px;
  background: #8ea6c2;
  font-weight: 700;
}

.view-title button {
  padding: 0 9px 0 7px;
}

.view-title .drop {
  width: 11px;
  padding: 0;
  border-left: 1px solid #000;
}

.drop::after {
  content: "";
  display: block;
  width: 0;
  margin-left: 1px;
  border: 4px solid transparent;
  border-top-color: #000;
  border-bottom: 0;
}

.view-tabs {
  flex: none;
  display: flex;
  height: 25px;
  padding-top: 1px;
}

.view-tab {
  height: 24px;
  padding: 0 5px 0 12px;
  border: 1px solid #a2a9ba;
  border-width: 0 1px 1px 0;
  border-bottom-right-radius: 4px;
  background: linear-gradient(53deg, #a2a9ba 8px, #d5daea 8px);
  clip-path: polygon(0 0, 100% 0, 100% 100%, 9px 100%, 0 12px);
}

.view-tab.active {
  padding-right: 4px;
  background: linear-gradient(53deg, #a2a9ba 8px, #fff 8px);
}

.view-tab.plus {
  padding: 0 9px 0 13px;
  background: linear-gradient(53deg, #a2a9ba 8px, #e0e3eb 8px);
}

.view-tab svg {
  display: block;
  width: 10px;
  height: 10px;
}

/* Layer panel */
.panel {
  flex: none;
  display: flex;
  flex-direction: column;
  width: 59px;
  padding: 4px 0 3px 7px;
  overflow: hidden;
}

.panel .grip {
  margin: 0;
}

.panel-tabs {
  flex: none;
  display: flex;
  height: 29px;
  padding-top: 1px;
}

.panel-tabs button {
  flex: none;
  width: 27px;
  border: 1px solid #a2a9ba;
  border-bottom: 0;
  border-radius: 6px 12px 0 0;
  background: #d5daea;
}

.panel-tabs .active {
  width: 30px;
  border-right: 0;
  background: #f4f5f9;
}

.panel-tabs svg {
  display: block;
  width: 22px;
  height: 22px;
}

.panel-body {
  flex: 1;
  display: flex;
  flex-direction: column;
  min-height: 0;
  border: 1px solid #9ba4b4;
  border-width: 0 0 1px 1px;
  background: #fff;
}

.panel-tools {
  flex: none;
  display: flex;
  gap: 10px;
  height: 27px;
  padding: 0 0 0 6px;
  border-bottom: 1px solid #a8aebb;
  background: #f3f4f8;
}

.panel-tools svg {
  display: block;
  width: 14px;
  height: 16px;
}

.panel table {
  width: 100%;
  border-collapse: collapse;
  white-space: nowrap;
}

.panel th {
  height: 22px;
  padding: 0 0 0 5px;
  border-bottom: 1px solid #cfcfd4;
  background: linear-gradient(#fff, #f1f1f4);
  font-size: 12px;
  font-weight: 400;
  line-height: 20px;
  text-align: left;
}

.panel td {
  height: 21px;
  padding: 0 0 0 8px;
  border-bottom: 1px dotted #ddd;
  font-size: 12px;
  line-height: 20px;
}

.panel .current td {
  height: 24px;
  padding-top: 3px;
  font-size: 13px;
  font-weight: 700;
}

.scrollbar {
  display: flex;
  height: 16px;
  margin-top: auto;
  background: #eef0f3;
}

.scrollbar .arrow {
  width: 18px;
}

.arrow::after {
  content: "";
  display: inline-block;
  border: 4px solid transparent;
  border-right-color: #333;
  border-left: 0;
}

.scrollbar .thumb {
  flex: 1;
  border: 1px solid #888;
  border-right: 0;
  border-radius: 2px 0 0 2px;
  background: linear-gradient(#f6f6f6 50%, #d2d2d5 50%);
}

/* Object snaps */
.osnap {
  flex: none;
  display: flex;
  align-items: center;
  gap: 7px;
  height: 26px;
  padding: 8px 0 0 9px;
  white-space: nowrap;
}

.osnap label {
  display: flex;
  align-items: center;
  gap: 3px;
  line-height: 18px;
}

.osnap input {
  appearance: none;
  width: 13px;
  height: 13px;
  margin: 0;
  border: 1px solid #8b8f94;
  background: linear-gradient(135deg, #ccd0d4, #fff);
  box-shadow: inset 0 0 0 1px #fff;
}

.osnap input:checked::after {
  content: "";
  display: block;
  width: 3px;
  height: 6px;
  margin: 0 0 0 3px;
  border: solid #3c569c;
  border-width: 0 2px 2px 0;
  transform: rotate(35deg);
}

.osnap .toggle {
  gap: 4px;
}

.osnap .toggle input {
  width: 11px;
  height: 11px;
  border-color: #666;
  border-radius: 3px;
  background: linear-gradient(#fff, #ccc);
}

.osnap .last {
  margin-left: 14px;
}

/* Status bar */
.status {
  flex: none;
  display: flex;
  height: 17px;
  overflow: hidden;
  border-top: 1px solid #a2a9ba;
  font-size: 12px;
  text-align: center;
  white-space: nowrap;
}

.status > * {
  flex: none;
  height: 19px;
  padding: 0 7px 0 6px;
  border-right: 1px solid #a2a9ba;
  line-height: 19px;
}

.status .plane {
  width: 61px;
}

.status .coord {
  width: 88px;
}

.status .layer {
  display: flex;
  width: 168px;
  padding: 0 3px;
}

.layer i {
  width: 14px;
  height: 13px;
  margin: 3px 2px 0 0;
  background: #000;
}

.status .on {
  background: #e2f2fc;
  font-weight: 700;
}

.status .tolerance {
  padding: 0 1px;
  border-right: 0;
}
```
